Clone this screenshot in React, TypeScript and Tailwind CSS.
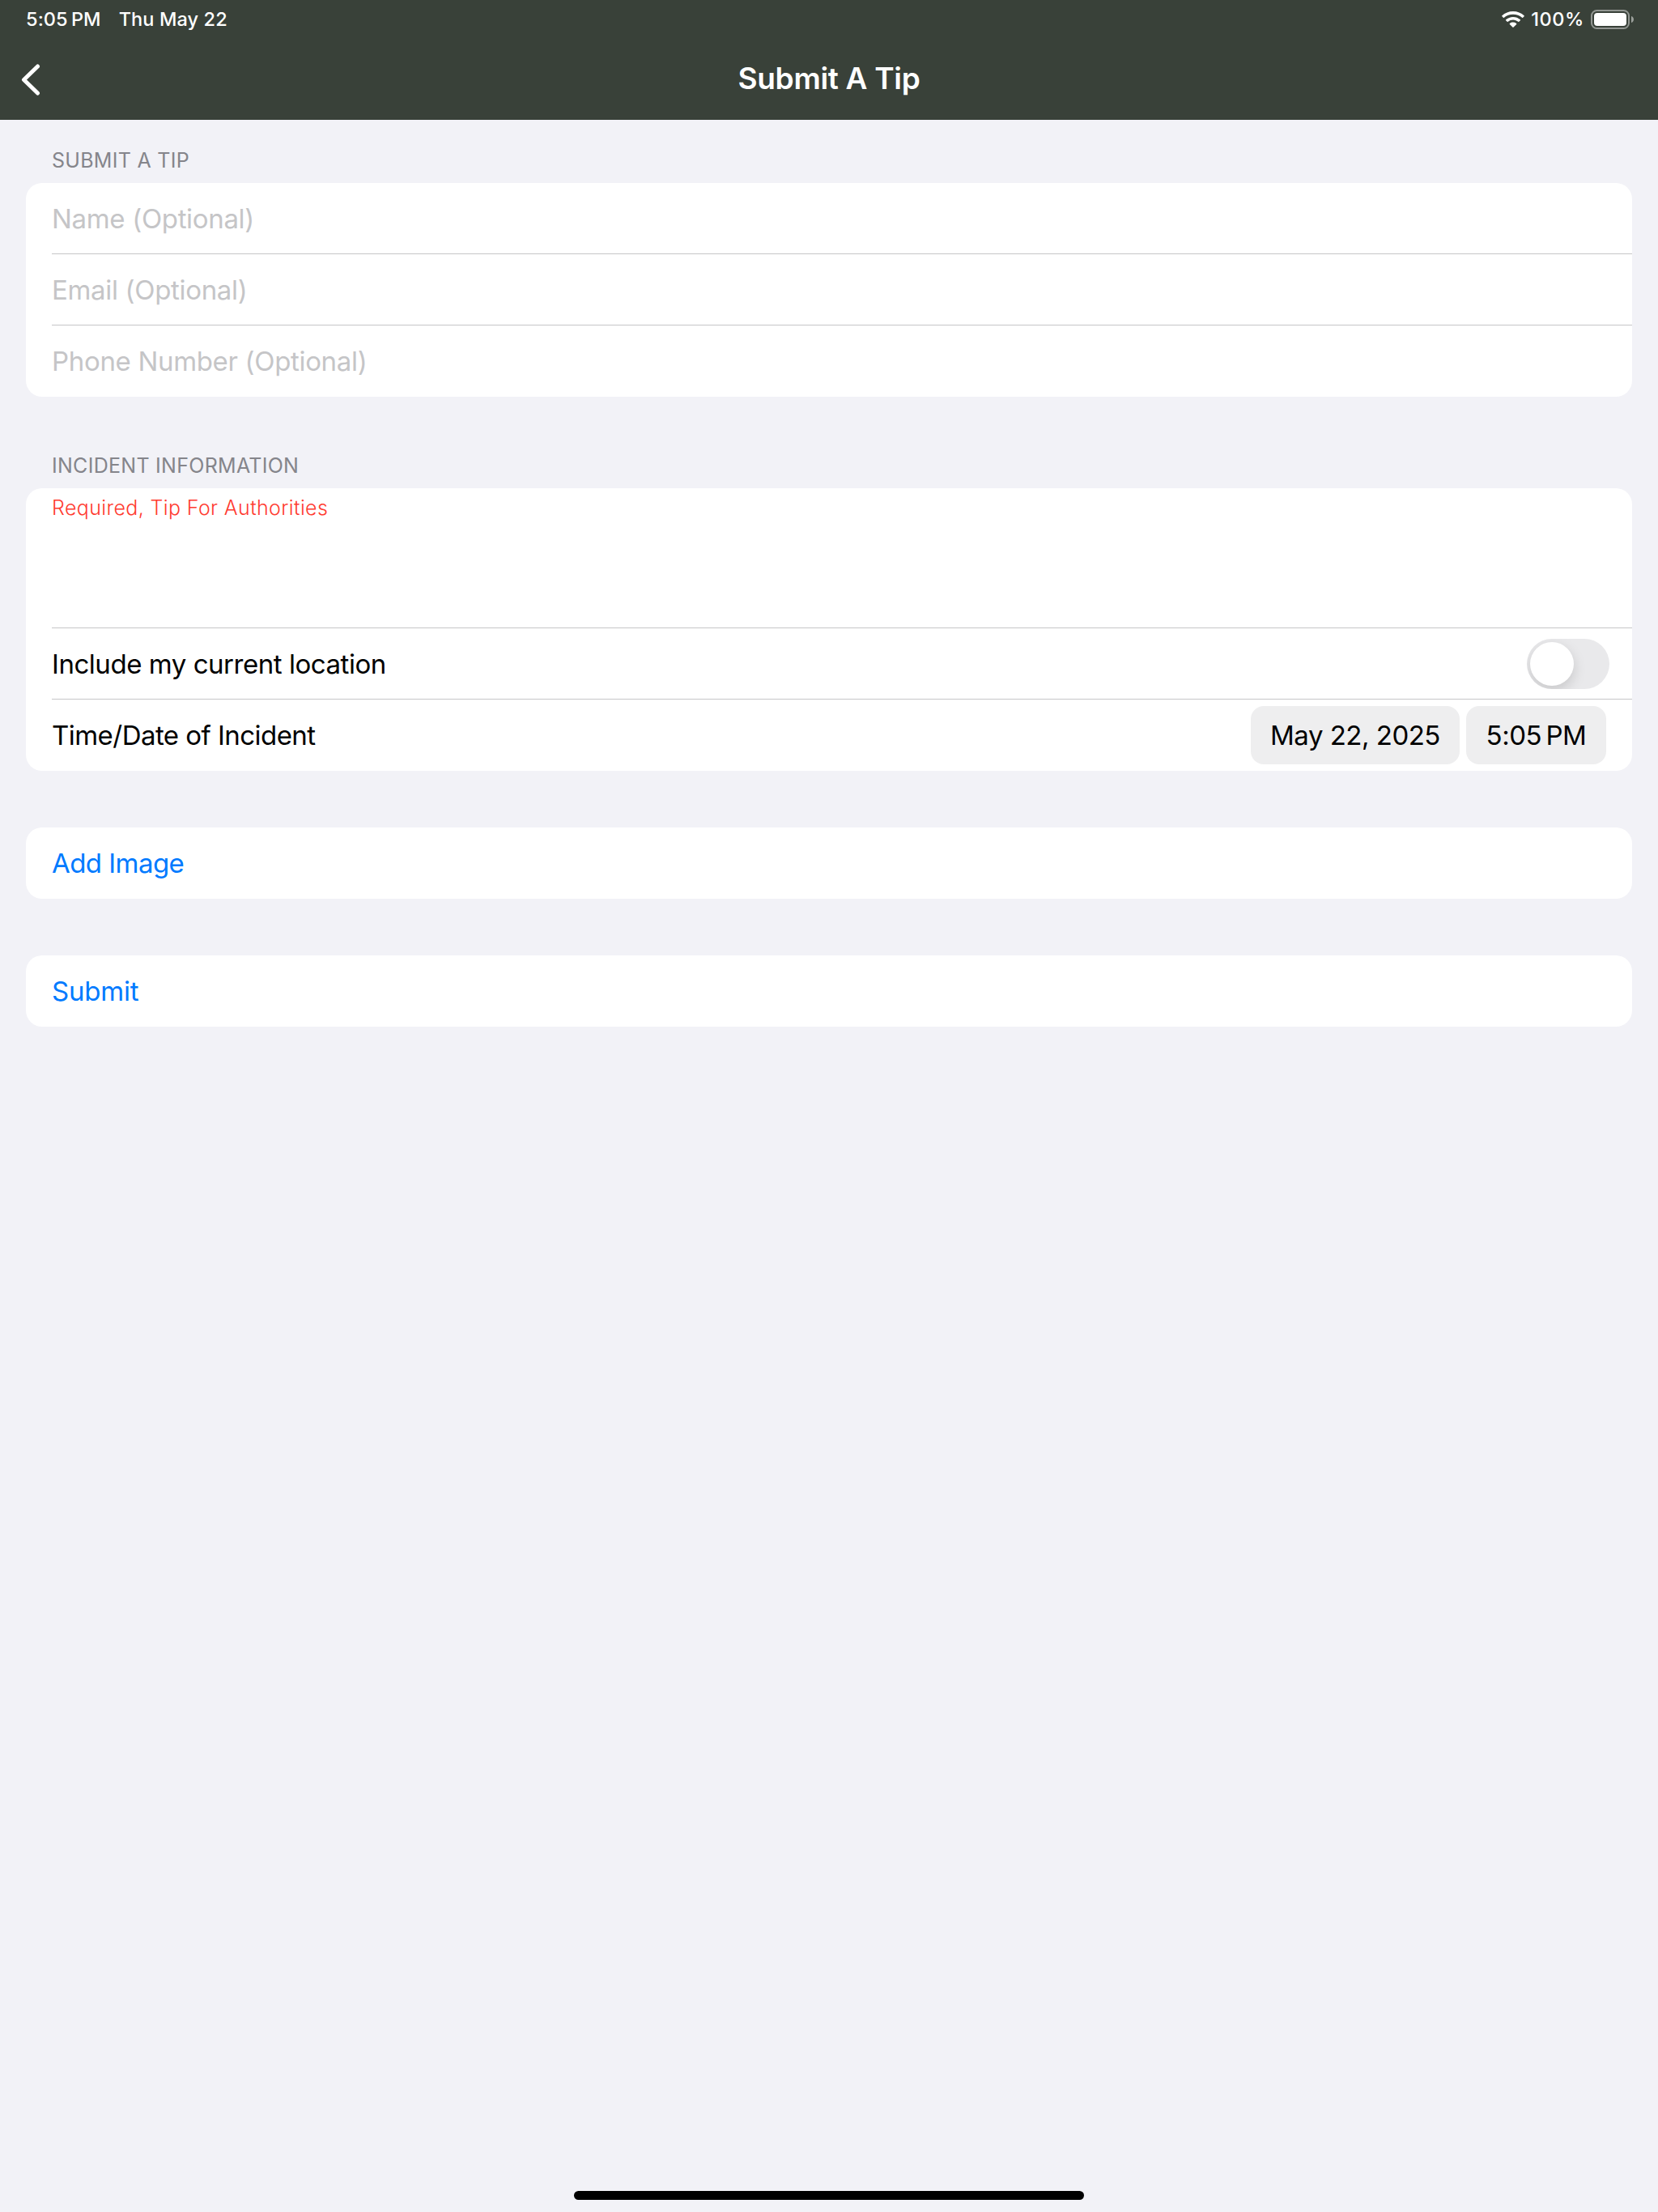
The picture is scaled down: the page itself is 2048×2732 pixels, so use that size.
import type { ReactNode } from "react";

const Section = ({ title, className, children }: { title?: string; className: string; children: ReactNode }) => (
  <section className={className}>
    {title && (
      <h2 className="h-[46px] pl-8 pt-[3px] text-[25px] leading-[30px] tracking-[0.28px] text-[#85858b]">{title}</h2>
    )}
    <div className="overflow-hidden rounded-[20px] bg-white">{children}</div>
  </section>
);

const Divider = () => <div className="-mt-px ml-8 h-px bg-[#c6c6c8]" />;

const Field = ({ placeholder }: { placeholder: string }) => (
  <div className="flex h-[88px] items-center pl-8">
    <span className="text-[33px] leading-[40px] tracking-[-0.33px] text-[#c5c5c7]">{placeholder}</span>
  </div>
);

const ActionRow = ({ label, tracking }: { label: string; tracking: string }) => (
  <div className={`flex h-[88px] items-center pl-8 pt-0.5 text-[33px] text-[#007aff] ${tracking}`}>{label}</div>
);

const WifiIcon = () => (
  <svg className="h-5 w-7" viewBox="0 0 28 20" fill="#fff">
    <path d="M14 0C8.700 0 3.900 2 .4 5.300a.7.7 0 0 0 0 1l1.500 1.500c.3.300.7.300 1 0C5.800 5.200 9.700 3.700 14 3.700s8.200 1.500 11.100 4.100c.3.300.7.300 1 0l1.500-1.500a.7.7 0 0 0 0-1C24.100 2 19.300 0 14 0Z" />
    <path d="M14 6.900c-3.400 0-6.500 1.300-8.900 3.400-.3.300-.3.700 0 1l1.600 1.500c.3.300.7.300 1 0A9.400 9.400 0 0 1 14 10.400c2.400 0 4.600.9 6.300 2.400.3.300.7.300 1 0l1.600-1.500c.3-.3.300-.7 0-1A13.400 13.400 0 0 0 14 6.900Z" />
    <path d="M14 13.500c-1.600 0-3 .5-4.100 1.400-.4.300-.4.700-.1 1l3.600 3.700c.3.400.8.400 1.200 0l3.600-3.700c.3-.3.300-.7-.1-1A6.600 6.600 0 0 0 14 13.500Z" />
  </svg>
);

const BatteryIcon = () => (
  <svg className="h-6 w-[54px]" viewBox="0 0 54 24" fill="none">
    <rect x="1" y="1" width="46" height="22" rx="6.500" stroke="#fff" strokeOpacity=".45" strokeWidth="2" />
    <rect x="4" y="4" width="40" height="16" rx="4" fill="#fff" />
    <path d="M50 8c1.800.6 3 2.100 3 4s-1.200 3.400-3 4Z" fill="#fff" fillOpacity=".5" />
  </svg>
);

const App = () => {
  return (
    <div className="flex h-[2732px] w-[2048px] flex-col bg-[#f2f2f7] font-['Inter',sans-serif] text-black">
      {/* Status bar + navigation */}
      <header className="h-[148px] bg-[#394139] text-white">
        <div className="flex h-12 items-center justify-between pl-8 pr-[29px] text-[23.5px] font-medium tracking-[0.1px]">
          <div className="flex gap-[22px]">
            <span>5:05{"\u2009"}PM</span>
            <span>Thu May 22</span>
          </div>
          <div className="flex items-center">
            <WifiIcon />
            <span className="ml-2 tracking-[0.6px]">100%</span>
            <span className="ml-2"><BatteryIcon /></span>
          </div>
        </div>
        <div className="grid h-[100px] grid-cols-[200px_1fr_200px] items-center">
          <svg className="ml-[26px] h-10 w-6" viewBox="0 0 24 40" fill="none">
            <path d="M20.500 4 3.500 20.500 20.500 37" stroke="#fff" strokeWidth="5" strokeLinecap="round" strokeLinejoin="round" />
          </svg>
          <h1 className="pb-[3px] text-center text-[37px] font-semibold leading-[48px] tracking-[-0.3px]">Submit A Tip</h1>
        </div>
      </header>

      <main className="flex-1 px-8">
        <Section title="SUBMIT A TIP" className="pt-8">
          <Field placeholder="Name (Optional)" />
          <Divider />
          <Field placeholder="Email (Optional)" />
          <Divider />
          <Field placeholder="Phone Number (Optional)" />
        </Section>

        <Section title="INCIDENT INFORMATION" className="mt-[67px]">
          <div className="h-[173px] pl-8 pt-2">
            <p className="text-[25px] font-light leading-[32px] tracking-[0.37px] text-[#ff3b30]">Required, Tip For Authorities</p>
          </div>
          <Divider />
          <div className="flex h-[88px] items-center justify-between pl-8 pr-7">
            <span className="pt-0.5 text-[33px] tracking-[-0.46px]">Include my current location</span>
            <div className="h-[62px] w-[102px] overflow-hidden rounded-full bg-[#e9e9eb] p-1">
              <div className="h-[54px] w-[54px] rounded-full bg-white shadow-[0_6px_16px_rgba(0,0,0,0.15)]" />
            </div>
          </div>
          <Divider />
          <div className="flex h-[88px] items-center justify-between px-8">
            <span className="pt-0.5 text-[33px] tracking-[-0.54px]">Time/Date of Incident</span>
            <div className="flex gap-2 text-[33px] tracking-[-0.5px]">
              <div className="flex h-[72px] w-[258px] items-center justify-center rounded-2xl bg-[#eeeeef] pt-0.5">
                <span>May 22, 2025</span>
              </div>
              <div className="flex h-[72px] w-[173px] items-center justify-center rounded-2xl bg-[#eeeeef] pt-0.5">
                <span>5:05{"\u2009"}PM</span>
              </div>
            </div>
          </div>
        </Section>

        <Section className="mt-[70px]">
          <ActionRow label="Add Image" tracking="tracking-[-0.55px]" />
        </Section>

        <Section className="mt-[70px]">
          <ActionRow label="Submit" tracking="tracking-[-0.2px]" />
        </Section>
      </main>

      {/* Home indicator */}
      <div className="mb-[15px] h-[11px] w-[630px] self-center rounded-full bg-black" />
    </div>
  );
};

export default App;
